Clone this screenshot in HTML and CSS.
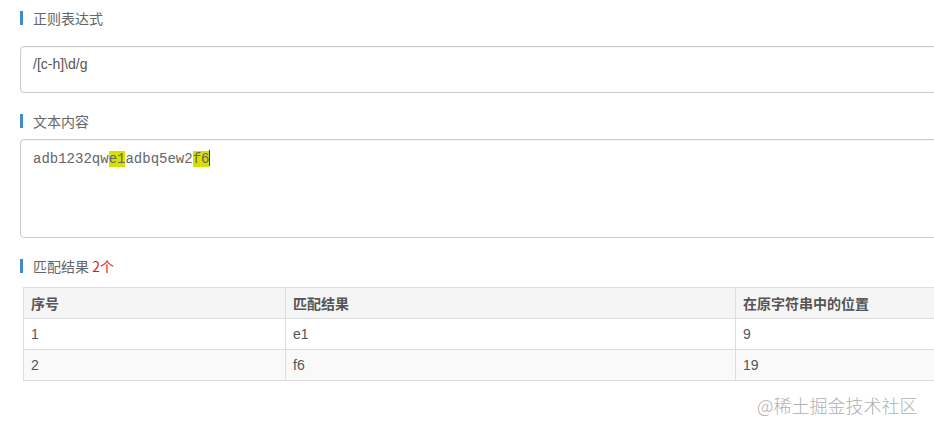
FILE: index.html
```html
<!DOCTYPE html>
<html lang="zh-CN">
<head>
<meta charset="utf-8">
<title>正则表达式测试</title>
<link rel="stylesheet" href="styles.css">
</head>
<body>
<div class="page">
  <div class="section-title title-first">正则表达式</div>
  <div class="field field-regex">/[c-h]\d/g</div>

  <div class="section-title">文本内容</div>
  <div class="field field-text">adb1232qw<span class="hl">e1</span>adbq5ew2<span class="hl">f6</span><span class="caret"></span></div>

  <div class="section-title">匹配结果 <span class="count">2个</span></div>
  <table class="result">
    <colgroup>
      <col class="c1">
      <col class="c2">
      <col class="c3">
    </colgroup>
    <thead>
      <tr><th>序号</th><th>匹配结果</th><th>在原字符串中的位置</th></tr>
    </thead>
    <tbody>
      <tr><td>1</td><td>e1</td><td>9</td></tr>
      <tr class="alt"><td>2</td><td>f6</td><td>19</td></tr>
    </tbody>
  </table>
</div>
<div class="watermark">@稀土掘金技术社区</div>
</body>
</html>
```

FILE: styles.css
```css
html, body {
  margin: 0;
  padding: 0;
  background: #fff;
  overflow: hidden;
}

body {
  font-family: "Liberation Sans", Arial, "Noto Sans CJK SC", sans-serif;
  font-size: 14px;
  color: #555;
}

.page {
  width: 1000px;
  padding-left: 20px;
  box-sizing: border-box;
  display: flex;
  flex-direction: column;
  align-items: flex-start;
}

.section-title {
  border-left: 3px solid #428bca;
  padding-left: 10px;
  height: 14px;
  line-height: 14px;
  font-size: 14px;
  color: #666;
  font-family: "Noto Sans CJK SC", "Liberation Sans", sans-serif;
  margin-top: 21px;
  display: flex;
  align-items: center;
  white-space: pre;
}

.title-first {
  margin-top: 11px;
}

.count {
  color: #dd1c1c;
}

.field {
  width: 960px;
  box-sizing: border-box;
  border: 1px solid #ccc;
  border-radius: 4px;
  padding: 7px 12px;
  line-height: 20px;
  color: #555;
  box-shadow: inset 0 1px 1px rgba(0, 0, 0, 0.04);
}

.field-regex {
  height: 47px;
  margin-top: 21px;
  font-family: "Liberation Sans", Arial, sans-serif;
  font-size: 14px;
}

.field-text {
  height: 99px;
  margin-top: 11px;
  padding-top: 9px;
  font-family: "Liberation Mono", "Courier New", monospace;
  font-size: 14px;
  color: #666;
}

.hl {
  background: #d9e000;
}

.caret {
  display: inline-block;
  width: 1px;
  height: 16px;
  background: #333;
  vertical-align: -3px;
}

.result {
  margin-top: 14px;
  margin-left: 3px;
  width: 940px;
  border-collapse: collapse;
  table-layout: fixed;
  border: 1px solid #ddd;
}

.result col.c1 { width: 262px; }
.result col.c2 { width: 450px; }

.result th,
.result td {
  border: 1px solid #ddd;
  padding: 5px 7px;
  line-height: 20px;
  height: 20px;
  text-align: left;
  font-size: 14px;
  color: #555;
}

.result th {
  background: #f5f5f5;
  font-weight: bold;
  font-family: "Noto Sans CJK SC", "Liberation Sans", sans-serif;
  color: #555;
}

.result tr.alt td {
  background: #f9f9f9;
}

.watermark {
  position: absolute;
  left: 757px;
  top: 393px;
  font-size: 18px;
  line-height: 24px;
  color: #b0b0b0;
  font-weight: 300;
  font-family: "Noto Sans CJK SC", "Liberation Sans", sans-serif;
  white-space: nowrap;
}
```
